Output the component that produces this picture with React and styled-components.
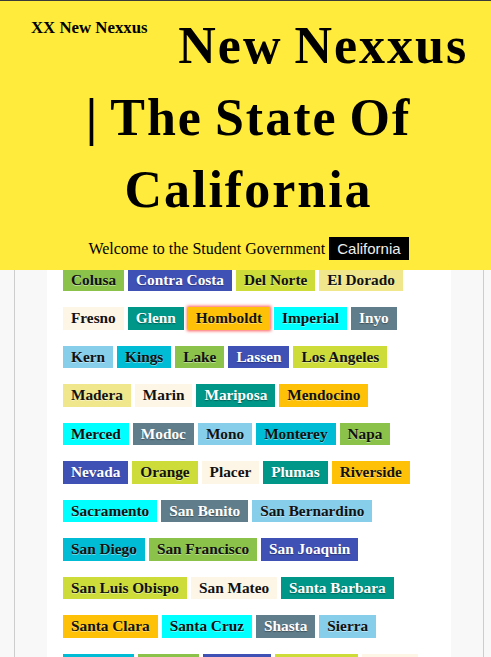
import React from 'react';
import styled, { createGlobalStyle } from 'styled-components';

const GlobalStyle = createGlobalStyle`
  html, body {
    margin: 0;
    padding: 0;
    background: #f8f8f8;
    font-family: "Liberation Serif", serif;
  }
`;

const C = {
  green: ['#8bc34a', '#111'],
  indigo: ['#3f51b5', '#fff'],
  lime: ['#cddc39', '#111'],
  khaki: ['#f0e68c', '#111'],
  lace: ['#fdf5e6', '#111'],
  teal: ['#009688', '#fff'],
  amber: ['#ffc107', '#111'],
  aqua: ['#00ffff', '#111'],
  slate: ['#607d8b', '#fff'],
  sky: ['#87ceeb', '#111'],
  cyan: ['#00bcd4', '#111'],
};

// rows as they wrap in the column
const rows = [
  [['Colusa', 'green'], ['Contra Costa', 'indigo'], ['Del Norte', 'lime'], ['El Dorado', 'khaki']],
  [['Fresno', 'lace'], ['Glenn', 'teal'], ['Homboldt', 'amber', true], ['Imperial', 'aqua'], ['Inyo', 'slate']],
  [['Kern', 'sky'], ['Kings', 'cyan'], ['Lake', 'green'], ['Lassen', 'indigo'], ['Los Angeles', 'lime']],
  [['Madera', 'khaki'], ['Marin', 'lace'], ['Mariposa', 'teal'], ['Mendocino', 'amber']],
  [['Merced', 'aqua'], ['Modoc', 'slate'], ['Mono', 'sky'], ['Monterey', 'cyan'], ['Napa', 'green']],
  [['Nevada', 'indigo'], ['Orange', 'lime'], ['Placer', 'lace'], ['Plumas', 'teal'], ['Riverside', 'amber']],
  [['Sacramento', 'aqua'], ['San Benito', 'slate'], ['San Bernardino', 'sky']],
  [['San Diego', 'cyan'], ['San Francisco', 'green'], ['San Joaquin', 'indigo']],
  [['San Luis Obispo', 'lime'], ['San Mateo', 'lace'], ['Santa Barbara', 'teal']],
  [['Santa Clara', 'amber'], ['Santa Cruz', 'aqua'], ['Shasta', 'slate'], ['Sierra', 'sky']],
  [['Siskiyou', 'cyan'], ['Solano', 'green'], ['Sonoma', 'indigo'], ['Stanislaus', 'lime'], ['Sutter', 'lace']],
  [['Tehama', 'teal'], ['Trinity', 'amber'], ['Tulare', 'aqua'], ['Tuolumne', 'slate']],
  [['Ventura', 'sky'], ['Yolo', 'cyan'], ['Yuba', 'green']],
];

const App = () => {
  return (
    <>
      <GlobalStyle />
      <Header>
        <Brand>XX New Nexxus</Brand>
        <Title>
          New Nexxus
          <br />| The State Of California
        </Title>
        <Welcome>
          Welcome to the Student Government <Badge>California</Badge>
        </Welcome>
      </Header>
      <Page>
        <Frame>
          <Main>
            <Counties>
              {rows.map((row, i) => (
                <Row key={i}>
                  {row.map(([name, color, active]) => (
                    <Tag key={name} $bg={C[color][0]} $fg={C[color][1]} $active={active}>
                      {name}
                    </Tag>
                  ))}
                </Row>
              ))}
            </Counties>
          </Main>
        </Frame>
      </Page>
    </>
  );
};

const Header = styled.header`
  position: fixed;
  top: 0;
  left: 0;
  right: 0;
  z-index: 10;
  background: #ffeb3b;
  border-top: 1px solid #3a3a3a;
  padding: 9px 0 10px 6px;
  color: #000;
`;

const Brand = styled.div`
  float: left;
  margin: 9px 8px 0 25px;
  font-size: 16.8px;
  font-weight: bold;
  line-height: 18px;
`;

const Title = styled.h1`
  margin: 0;
  text-align: center;
  font-size: 52px;
  letter-spacing: 2px;
  word-spacing: -3px;
  line-height: 72px;
  font-weight: bold;
`;

const Welcome = styled.div`
  margin-top: 11px;
  text-align: center;
  font-size: 16px;
  line-height: 23px;
`;

const Badge = styled.span`
  display: inline-block;
  background: #000;
  color: #eee;
  font-family: "Liberation Sans", sans-serif;
  font-size: 15px;
  line-height: 23px;
  padding: 0 8px;
`;

const Page = styled.div`
  padding: 0 7px 0 14px;
`;

const Frame = styled.div`
  border-left: 1px solid #cdcdcd;
  border-right: 1px solid #cdcdcd;
  background: #f8f8f8;
  padding: 0 32px;
`;

const Main = styled.main`
  background: #fff;
  min-height: 800px;
`;

const Counties = styled.div`
  display: flex;
  flex-direction: column;
  gap: 16px;
  padding: 268.5px 16px 40px;
`;

const Row = styled.div`
  display: flex;
  gap: 4px;
`;

const Tag = styled.span`
  display: inline-block;
  background: ${p => p.$bg};
  color: ${p => p.$fg};
  font-size: 15.3px;
  font-weight: bold;
  line-height: 18.5px;
  padding: 2px 8px;
  white-space: nowrap;
  text-shadow: ${p =>
    p.$fg === '#fff' ? '0 1px 1px rgba(0, 0, 0, 0.35)' : '0 1px 0 rgba(255, 255, 255, 0.45)'};
  box-shadow: ${p => (p.$active ? '0 0 3px 1px rgba(255, 0, 0, 0.65)' : 'none')};
`;

export default App;
